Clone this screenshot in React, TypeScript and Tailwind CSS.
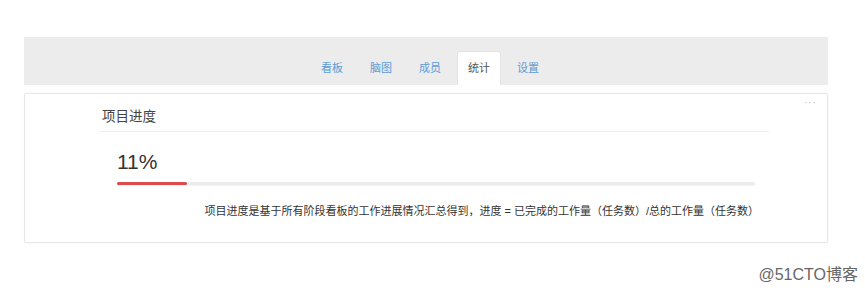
import React from 'react';

const TABS = ['看板', '脑图', '成员', '统计', '设置'];
const ACTIVE = '统计';

const FONT = '"Liberation Sans", "Noto Sans CJK SC", sans-serif';

export default function App() {
  const progress = 11;

  return (
    <div className="relative h-[293px] w-[865px] bg-white" style={{ fontFamily: FONT }}>
      <div className="px-[24px] pt-[37px]">
        {/* tab header */}
        <div className="flex h-[48px] w-[804px] items-end bg-[#ececec] pl-[286px]">
          <div className="flex gap-[5px]">
            {TABS.map((t) => (
              <div
                key={t}
                className={
                  t === ACTIVE
                    ? 'flex h-[34px] items-center rounded-t-[3px] border border-b-0 border-[#e3e3e3] bg-white px-[10px] text-[11px] text-[#555]'
                    : 'flex h-[34px] items-center px-[11px] text-[11px] text-[#5b9bd5]'
                }
              >
                {t}
              </div>
            ))}
          </div>
        </div>

        {/* stats card */}
        <div className="relative mt-[8px] h-[150px] w-[804px] rounded-[2px] border border-[#e6e6e6] bg-white shadow-[0_0_2px_rgba(0,0,0,0.04)]">
          <div className="absolute right-[10px] top-[4px] text-[10px] leading-none tracking-[1px] text-[#bbb]">···</div>

          <div className="ml-[74px] mr-[58px] pt-[14px]">
            <div className="border-b border-[#efefef] pb-[5px] pl-[3px] text-[13.5px] leading-[18px] text-[#444]">
              项目进度
            </div>
          </div>

          <div className="ml-[92px] w-[642px]">
            <div className="mt-[17px] text-[21px] leading-[26px] text-[#333]">{progress}%</div>
            <div className="mt-[7px] h-[3px] w-[638px] rounded-full bg-[#ececec] shadow-[0_1px_0_#f3f3f3]">
              <div className="h-[3px] rounded-full bg-[#dd4b4f]" style={{ width: `${progress}%` }} />
            </div>
            <div className="mt-[19px] text-right text-[11px] leading-[14px] text-[#333]">
              项目进度是基于所有阶段看板的工作进展情况汇总得到，进度 = 已完成的工作量（任务数）/总的工作量（任务数）
            </div>
          </div>
        </div>
      </div>

      <div className="absolute right-[7px] top-[266px] text-[16px] leading-[18px] text-[#666]">@51CTO博客</div>
    </div>
  );
}
